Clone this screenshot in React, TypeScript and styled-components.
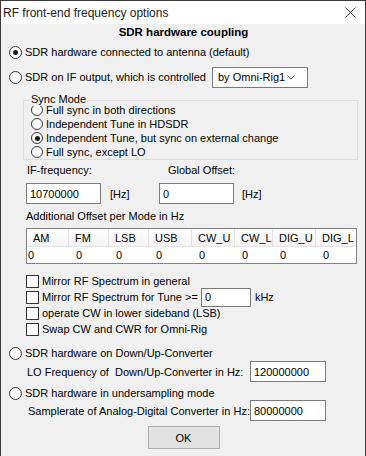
import React from "react";
import styled, { createGlobalStyle } from "styled-components";

const Global = createGlobalStyle`
  html, body { margin: 0; padding: 0; background: #f0f0f0; }
  * { box-sizing: border-box; }
`;

const Window = styled.div`
  width: 366px;
  height: 456px;
  background: #f0f0f0;
  border: 1px solid #3a3a3a;
  border-bottom: none;
  font-family: "Liberation Sans", Arial, sans-serif;
  font-size: 11px;
  color: #000;
  display: flex;
  flex-direction: column;
  overflow: hidden;
`;

const TitleBar = styled.div`
  height: 23px;
  background: #fff;
  display: flex;
  align-items: center;
  justify-content: space-between;
  padding: 0 9px 0 2px;
  font-size: 12px;
  color: #1a1a1a;
  flex-shrink: 0;
`;

const Body = styled.div`
  display: flex;
  flex-direction: column;
  padding: 0 7px 0 8px;
`;

const Heading = styled.div`
  height: 16px;
  line-height: 16px;
  text-align: center;
  font-weight: bold;
  font-size: 11.5px;
`;

const OptRow = styled.div<{ $h: number; $mt?: number; $ml?: number }>`
  height: ${(p) => p.$h}px;
  margin-top: ${(p) => p.$mt ?? 0}px;
  margin-left: ${(p) => p.$ml ?? 0}px;
  display: flex;
  align-items: center;
  white-space: nowrap;
  flex-shrink: 0;
`;

const RadioCircle = styled.span<{ $on?: boolean; $size?: number }>`
  width: ${(p) => p.$size ?? 13}px;
  height: ${(p) => p.$size ?? 13}px;
  border: 1px solid #333;
  border-radius: 50%;
  background: #fff;
  display: inline-flex;
  align-items: center;
  justify-content: center;
  margin-right: 3px;
  flex-shrink: 0;
  &::after {
    content: "";
    width: 5px;
    height: 5px;
    border-radius: 50%;
    background: ${(p) => (p.$on ? "#1a1a1a" : "transparent")};
  }
`;

const CheckBox = styled.span`
  width: 13px;
  height: 13px;
  border: 1px solid #333;
  background: #fff;
  margin-right: 3px;
  flex-shrink: 0;
`;

const LabelSlot = styled.div<{ $w: number }>`
  width: ${(p) => p.$w}px;
  display: flex;
  align-items: center;
`;

const Select = styled.div`
  width: 96px;
  height: 21px;
  border: 1px solid #7a7a7a;
  background: #fff;
  display: flex;
  align-items: center;
  justify-content: space-between;
  padding: 0 12px 0 5px;
`;

const Group = styled.div`
  position: relative;
  margin: 10px 0 0 14px;
  border: 1px solid #dcdcdc;
  padding: 2px 0 0 7px;
  display: flex;
  flex-direction: column;
`;

const Legend = styled.span`
  position: absolute;
  left: 6px;
  top: -9px;
  line-height: 14px;
  padding: 0 1px;
  background: #f0f0f0;
`;

const FreqGrid = styled.div<{ $h: number; $mt: number }>`
  display: grid;
  grid-template-columns: 75px 58px 75px 1fr;
  height: ${(p) => p.$h}px;
  margin: ${(p) => p.$mt}px 0 0 17px;
  align-items: center;
`;

const GridText = styled.span<{ $pl?: number }>`
  padding-left: ${(p) => p.$pl ?? 0}px;
  white-space: nowrap;
`;

const TextBox = styled.div<{ $w?: number; $h?: number }>`
  width: ${(p) => (p.$w ? `${p.$w}px` : "auto")};
  height: ${(p) => p.$h ?? 21}px;
  border: 1px solid #7a7a7a;
  background: #fff;
  display: flex;
  align-items: center;
  padding-left: 3px;
  flex-shrink: 0;
`;

const Caption = styled.div<{ $mt: number; $ml: number }>`
  height: 14px;
  line-height: 14px;
  margin: ${(p) => p.$mt}px 0 0 ${(p) => p.$ml}px;
`;

const Table = styled.div`
  margin: 5px 1px 0 17px;
  border: 1px solid #828282;
  background: #fff;
  display: grid;
  grid-template-columns: 42px 40px 40px 43px 43px 38px 43px 1fr;
  grid-template-rows: 18px 16px;
`;

const HeadCell = styled.div`
  background: linear-gradient(#ffffff, #f3f3f3);
  border-right: 1px solid #e3e3e3;
  border-bottom: 1px solid #e3e3e3;
  padding-left: 6px;
  display: flex;
  align-items: center;
  &:nth-child(8) { border-right: none; }
`;

const DataCell = styled.div<{ $first?: boolean }>`
  padding-left: ${(p) => (p.$first ? 1 : 7)}px;
  display: flex;
  align-items: center;
`;

const PairRow = styled.div<{ $mt: number; $ml: number }>`
  display: flex;
  align-items: center;
  justify-content: space-between;
  height: 21px;
  margin: ${(p) => p.$mt}px 32px 0 ${(p) => p.$ml}px;
  white-space: nowrap;
`;

const Button = styled.div`
  width: 72px;
  height: 23px;
  margin: 5px auto 0;
  background: #e1e1e1;
  border: 1px solid #adadad;
  display: flex;
  align-items: center;
  justify-content: center;
`;

const cols = ["AM", "FM", "LSB", "USB", "CW_U", "CW_L", "DIG_U", "DIG_L"];
const syncModes = [
  "Full sync in both directions",
  "Independent Tune in HDSDR",
  "Independent Tune, but sync on external change",
  "Full sync, except LO",
];
const checks = [
  "Mirror RF Spectrum in general",
  "Mirror RF Spectrum for Tune >=",
  "operate CW in lower sideband (LSB)",
  "Swap CW and CWR for Omni-Rig",
];

export default function App() {
  return (
    <>
      <Global />
      <Window>
        <TitleBar>
          <span>RF front-end frequency options</span>
          <svg width="11" height="11" viewBox="0 0 11 11">
            <path d="M0.5 0.5 L10.5 10.5 M10.5 0.5 L0.5 10.5" stroke="#333" strokeWidth="1" fill="none" />
          </svg>
        </TitleBar>
        <Body>
          <Heading>SDR hardware coupling</Heading>
          <OptRow $h={24}>
            <RadioCircle $on />
            SDR hardware connected to antenna (default)
          </OptRow>
          <OptRow $h={26}>
            <LabelSlot $w={203}>
              <RadioCircle />
              SDR on IF output, which is controlled
            </LabelSlot>
            <Select>
              <span>by Omni-Rig1</span>
              <svg width="8" height="5" viewBox="0 0 8 5">
                <polyline points="0.5,0.5 4,4 7.5,0.5" stroke="#555" strokeWidth="1" fill="none" />
              </svg>
            </Select>
          </OptRow>
          <Group>
            <Legend>Sync Mode</Legend>
            {syncModes.map((m, i) => (
              <OptRow key={m} $h={14}>
                <RadioCircle $size={12} $on={i === 2} />
                {m}
              </OptRow>
            ))}
          </Group>
          <FreqGrid $h={14} $mt={3}>
            <GridText $pl={1}>IF-frequency:</GridText>
            <span />
            <GridText $pl={9}>Global Offset:</GridText>
            <span />
          </FreqGrid>
          <FreqGrid $h={21} $mt={6}>
            <TextBox>10700000</TextBox>
            <GridText $pl={9}>[Hz]</GridText>
            <TextBox>0</TextBox>
            <GridText $pl={8}>[Hz]</GridText>
          </FreqGrid>
          <Caption $mt={5} $ml={17}>Additional Offset per Mode in Hz</Caption>
          <Table>
            {cols.map((c) => (
              <HeadCell key={c}>{c}</HeadCell>
            ))}
            {cols.map((c, i) => (
              <DataCell key={c} $first={i === 0}>0</DataCell>
            ))}
          </Table>
          {checks.map((c, i) => (
            <OptRow key={c} $h={16} $mt={i === 0 ? 9 : 0} $ml={17}>
              <CheckBox />
              {c}
              {i === 1 && (
                <>
                  <TextBox $w={50} $h={19} style={{ marginLeft: 3 }}>0</TextBox>
                  <GridText $pl={4}>kHz</GridText>
                </>
              )}
            </OptRow>
          ))}
          <OptRow $h={16} $mt={8}>
            <RadioCircle />
            SDR hardware on Down/Up-Converter
          </OptRow>
          <PairRow $mt={0} $ml={18}>
            <span>LO Frequency of&nbsp; Down/Up-Converter in Hz:</span>
            <TextBox $w={76}>120000000</TextBox>
          </PairRow>
          <OptRow $h={14} $mt={4}>
            <RadioCircle />
            SDR hardware in undersampling mode
          </OptRow>
          <PairRow $mt={0} $ml={19}>
            <span>Samplerate of Analog-Digital Converter in Hz:</span>
            <TextBox $w={76}>80000000</TextBox>
          </PairRow>
          <Button>OK</Button>
        </Body>
      </Window>
    </>
  );
}
